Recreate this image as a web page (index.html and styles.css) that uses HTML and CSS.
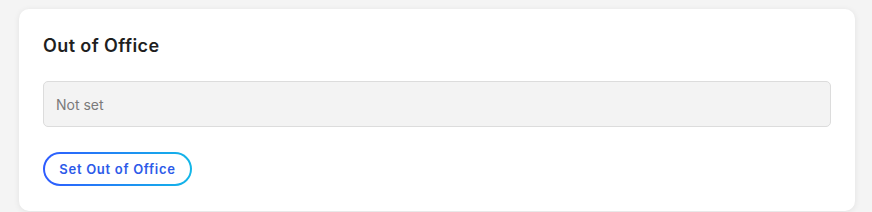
FILE: index.html
```html
<!DOCTYPE html>
<html>
<head>
<meta charset="utf-8">
<link rel="stylesheet" href="styles.css">
</head>
<body>
<div class="card">
  <h2 class="title">Out of Office</h2>
  <div class="field">Not set</div>
  <button class="btn"><span>Set Out of Office</span></button>
</div>
</body>
</html>
```
FILE: styles.css
```css
html, body { margin: 0; padding: 0; }
body {
  background: #f4f4f4;
  width: 872px;
  height: 212px;
  overflow: hidden;
  padding: 9px 17px 0 19px;
  box-sizing: border-box;
}
.card {
  background: #fff;
  border-radius: 10px;
  box-shadow: 0 1px 6px rgba(0,0,0,0.08);
  padding: 26px 24px 24px 24px;
  height: 202px;
  box-sizing: border-box;
}
.title {
  margin: 0;
  font-family: "Inter", sans-serif;
  font-weight: 600;
  font-size: 18px;
  line-height: 22px;
  letter-spacing: 0.4px;
  color: #1f1f1f;
}
.field {
  margin-top: 24px;
  height: 46px;
  box-sizing: border-box;
  border: 1px solid #dcdcdc;
  border-radius: 5px;
  background: #f3f3f3;
  padding: 0 12px;
  display: flex;
  align-items: center;
  font-family: "Inter", sans-serif;
  font-size: 14px;
  color: #7a7a7a;
}
.btn {
  margin-top: 25px;
  height: 34px;
  width: 149px;
  border-radius: 17px;
  border: 2px solid transparent;
  background: linear-gradient(#fff, #fff) padding-box, linear-gradient(90deg, #2e5bff, #12b7e8) border-box;
  font-family: "Inter", sans-serif;
  font-weight: 600;
  font-size: 13px;
  color: #2c5ae9;
  padding: 0;
  letter-spacing: 0.7px;
  cursor: pointer;
}
```
